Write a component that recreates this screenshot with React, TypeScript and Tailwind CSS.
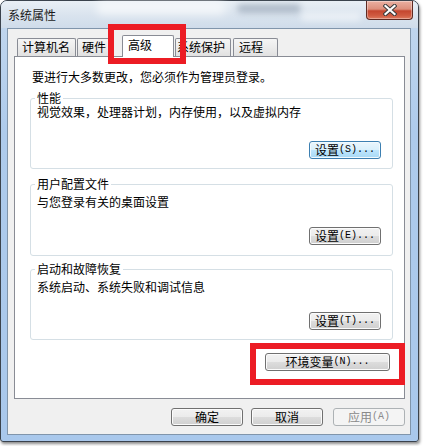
import React from "react";

const CJK = "font-['Noto_Sans_CJK_SC','Noto_Sans',sans-serif]";
const MONO = "font-['Liberation_Mono',monospace] text-[10px]";

type Variant = "normal" | "focus" | "disabled";

const btnStyles: Record<Variant, string> = {
  normal:
    "border-[#707070] bg-[linear-gradient(#f2f2f2_0%,#ebebeb_50%,#dddddd_50%,#cfcfcf_100%)] text-black shadow-[inset_0_0_0_1px_#fbfbfb]",
  focus:
    "border-[#3c7fb1] bg-[linear-gradient(#eaf6fd_0%,#d9f0fc_50%,#bee6fd_50%,#a7d9f5_100%)] text-black shadow-[inset_0_0_0_1px_#f2fafe]",
  disabled: "border-[#adb2b5] bg-[#f4f4f4] text-[#8a8a8a]",
};

function WinButton({
  label,
  accel,
  variant = "normal",
  wide = false,
  className = "",
}: {
  label: string;
  accel?: string;
  variant?: Variant;
  wide?: boolean;
  className?: string;
}) {
  return (
    <div
      className={`h-[18px] ${wide ? "w-[125px]" : "w-[72px]"} flex items-center justify-center rounded-[3px] border leading-[12px] ${btnStyles[variant]} ${className}`}
    >
      <span>{label}</span>
      {accel && <span className={MONO}>{accel}</span>}
    </div>
  );
}

function Group({
  title,
  desc,
  accel,
  focus = false,
  className,
  descMt,
  btnMt,
  pb,
}: {
  title: string;
  desc: string;
  accel: string;
  focus?: boolean;
  className: string;
  descMt: string;
  btnMt: string;
  pb: string;
}) {
  return (
    <fieldset className={`ml-[15px] mr-[11px] rounded-[3px] border border-[#d5dfe5] ${className}`}>
      <legend className="ml-[4px] px-[2px] leading-[12px]">{title}</legend>
      <div className={`ml-[6px] leading-[12px] ${descMt}`}>{desc}</div>
      <div className={`flex justify-end mr-[11px] ${btnMt} ${pb}`}>
        <WinButton label="设置" accel={accel} variant={focus ? "focus" : "normal"} />
      </div>
    </fieldset>
  );
}

function Tab({
  label,
  className,
  selected = false,
}: {
  label: string;
  className: string;
  selected?: boolean;
}) {
  return (
    <div
      className={`flex items-start rounded-t-[2px] border border-b-0 border-[#898c95] leading-[12px] whitespace-nowrap ${
        selected
          ? "relative z-10 h-[22px] -mb-[1px] bg-white pt-[3px]"
          : "h-[18px] bg-[linear-gradient(#f5f5f5_0%,#ececec_50%,#e1e1e1_100%)] pt-[2px]"
      } ${className}`}
    >
      {label}
    </div>
  );
}

export default function App() {
  return (
    <div className={`relative w-[424px] h-[446px] bg-white ${CJK} text-[12px] leading-[12px] text-black`}>
      {/* window */}
      <div className="w-[419px] h-[442px] flex flex-col rounded-t-[7px] rounded-b-[3px] border border-[#3b434d] bg-[linear-gradient(180deg,#c4d8ee_0%,#aecbec_30%,#a9c8ec_100%)] shadow-[1px_2px_3px_rgba(0,0,0,0.45)]">
        {/* title bar */}
        <div className="relative h-[27px] flex items-start rounded-t-[6px] bg-[linear-gradient(180deg,#e9eff5_0%,#d9e3ee_55%,#cfdcea_100%)]">
          <div className="absolute left-[95px] top-[0px] w-[130px] h-[14px] rounded-full bg-white/60 blur-[4px]" />
          <div className="absolute left-[236px] top-[3px] w-[64px] h-[9px] rounded-full bg-[#7e8ea2]/50 blur-[3px]" />
          <div className="absolute left-[300px] top-[12px] w-[60px] h-[8px] rounded-full bg-white/50 blur-[3px]" />
          <div className="relative pl-[7px] pt-[7px] text-[12px] leading-[14px] text-[#1a1a1a]">系统属性</div>
          <div className="relative ml-auto mr-[5px] w-[47px] h-[19px] flex items-center justify-center rounded-b-[4px] border border-t-0 border-[#5e2a22] bg-[linear-gradient(180deg,#eab0a2_0%,#dc8f7c_45%,#c5462f_55%,#cf5a40_80%,#de7a5e_100%)] shadow-[inset_0_0_0_1px_rgba(255,255,255,0.35)]">
            <svg width="14" height="12" viewBox="0 0 14 12">
              <path d="M2.5 2 L11.5 10 M11.5 2 L2.5 10" stroke="#3a3a3a" strokeWidth="4.2" strokeLinecap="square" />
              <path d="M2.5 2 L11.5 10 M11.5 2 L2.5 10" stroke="#ffffff" strokeWidth="2.2" strokeLinecap="square" />
            </svg>
          </div>
        </div>

        {/* client area */}
        <div className="ml-[6px] mr-[7px] h-[407px] flex flex-col border border-[#8095ab] bg-[#f0f0f0]">
          <div className="ml-[6px] mr-[5px] flex flex-col">
            {/* tabs */}
            <div className="h-[27px] flex items-end pl-[3px]">
              <Tab label="计算机名" className="w-[59px] pl-[4px]" />
              <Tab label="硬件" className="ml-[1px] w-[34px] pl-[4px]" />
              <Tab label="高级" className="ml-[11px] w-[52px] pl-[5px]" selected />
              <Tab label="系统保护" className="ml-[1px] w-[56px] pl-[1px]" />
              <Tab label="远程" className="ml-[2px] w-[45px] pl-[5px]" />
            </div>
            {/* panel */}
            <div className="h-[343px] flex flex-col border border-[#898c95] bg-white">
              <div className="mt-[14px] ml-[17px]">要进行大多数更改，您必须作为管理员登录。</div>
              <Group
                title="性能"
                desc="视觉效果，处理器计划，内存使用，以及虚拟内存"
                accel="(S)..."
                focus
                className="mt-[9px]"
                descMt="mt-[2px]"
                btnMt="mt-[23px]"
                pb="mb-[9px]"
              />
              <Group
                title="用户配置文件"
                desc="与您登录有关的桌面设置"
                accel="(E)..."
                className="mt-[9px]"
                descMt="mt-[6px]"
                btnMt="mt-[19px]"
                pb="mb-[10px]"
              />
              <Group
                title="启动和故障恢复"
                desc="系统启动、系统失败和调试信息"
                accel="(T)..."
                className="mt-[7px]"
                descMt="mt-[6px]"
                btnMt="mt-[19px]"
                pb="mb-[9px]"
              />
              <div className="mt-[13px] mr-[14px] flex justify-end">
                <WinButton label="环境变量" accel="(N)..." wide />
              </div>
            </div>
          </div>
          {/* bottom buttons */}
          <div className="mt-[9px] mr-[5px] flex justify-end">
            <WinButton label="确定" />
            <WinButton label="取消" className="ml-[8px]" />
            <WinButton label="应用" accel="(A)" variant="disabled" className="ml-[10px]" />
          </div>
        </div>
      </div>

      {/* red annotation boxes */}
      <div className="absolute left-[108px] top-[24px] w-[78px] h-[40px] border-[6px] border-[#ec1c24]" />
      <div className="absolute left-[250px] top-[343px] w-[155px] h-[42px] border-[6px] border-[#ec1c24]" />
    </div>
  );
}
